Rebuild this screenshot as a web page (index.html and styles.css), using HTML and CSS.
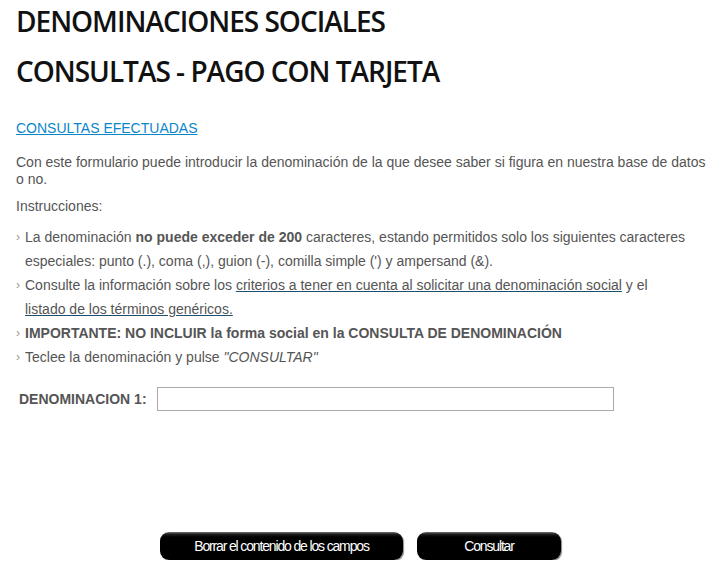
FILE: index.html
```html
<!DOCTYPE html>
<html lang="es">
<head>
<meta charset="utf-8">
<title>Denominaciones sociales</title>
<link rel="stylesheet" href="styles.css">
</head>
<body>
<div class="page">
  <h1 class="title">DENOMINACIONES SOCIALES</h1>
  <h2 class="title sub">CONSULTAS - PAGO CON TARJETA</h2>
  <p class="links"><a class="blue" href="#">CONSULTAS EFECTUADAS</a></p>
  <p class="intro">Con este formulario puede introducir la denominación de la que desee saber si figura en nuestra base de datos o no.</p>
  <p class="instr">Instrucciones:</p>
  <ul class="list">
    <li>La denominación <b>no puede exceder de 200</b> caracteres, estando permitidos solo los siguientes caracteres especiales: punto (.), coma (,), guion (-), comilla simple (') y ampersand (&amp;).</li>
    <li>Consulte la información sobre los <a class="dark" href="#">criterios a tener en cuenta al solicitar una denominación social</a> y el <a class="dark" href="#">listado de los términos genéricos.</a></li>
    <li><b>IMPORTANTE: NO INCLUIR la forma social en la CONSULTA DE DENOMINACIÓN</b></li>
    <li>Teclee la denominación y pulse <i>"CONSULTAR"</i></li>
  </ul>
  <div class="field">
    <label class="label" for="d1">DENOMINACION 1:</label>
    <input class="input" id="d1" type="text">
  </div>
  <div class="buttons">
    <button class="btn wide" type="button">Borrar el contenido de los campos</button>
    <button class="btn" type="button">Consultar</button>
  </div>
</div>
</body>
</html>
```
FILE: styles.css
```css
html, body { margin: 0; padding: 0; background: #fff; }
body { font-family: "Liberation Sans", Arial, sans-serif; font-size: 14px; color: #555; }
.page { padding: 0 16px; }
.title {
  font-family: "Open Sans", sans-serif;
  font-weight: 600;
  font-size: 28px;
  color: #111;
  margin: 0;
  line-height: 42px;
  letter-spacing: -1px;
}
.sub { margin-top: 8px; }
.links { margin: 28px 0 0; line-height: 17px; }
.blue { color: #0b86c9; }
.intro { margin: 17px 0 0; line-height: 17px; }
.instr { margin: 10px 0 0; line-height: 17px; }
.list { list-style: none; margin: 10px 19px 0 0; padding: 0 0 0 9px; }
.list li { position: relative; line-height: 24px; }
.list li::before {
  content: "›";
  position: absolute;
  left: -9px;
  top: 0;
  color: #999;
  font-size: 12px;
}
.dark { color: #555; text-decoration-color: #1c4f6e; }
.field { display: flex; align-items: center; margin-top: 18px; padding-left: 3px; }
.label { font-weight: bold; font-size: 14px; color: #555; width: 138px; }
.input {
  width: 457px;
  height: 24px;
  box-sizing: border-box;
  border: 1px solid #aaa;
  margin: 0;
  padding: 0 4px;
}
.buttons { display: flex; justify-content: center; gap: 14px; margin-top: 121px; padding-right: 4px; }
.btn {
  height: 28px;
  width: 144px;
  border: none;
  border-radius: 9px;
  background: linear-gradient(#777 0, #222 2px, #000 5px, #000 100%);
  color: #fff;
  font-family: "Liberation Sans", Arial, sans-serif;
  font-size: 14px;
  letter-spacing: -1.15px;
  padding: 0;
  box-shadow: 1px 1px 1px #888;
}
.wide { width: 243px; }
```
